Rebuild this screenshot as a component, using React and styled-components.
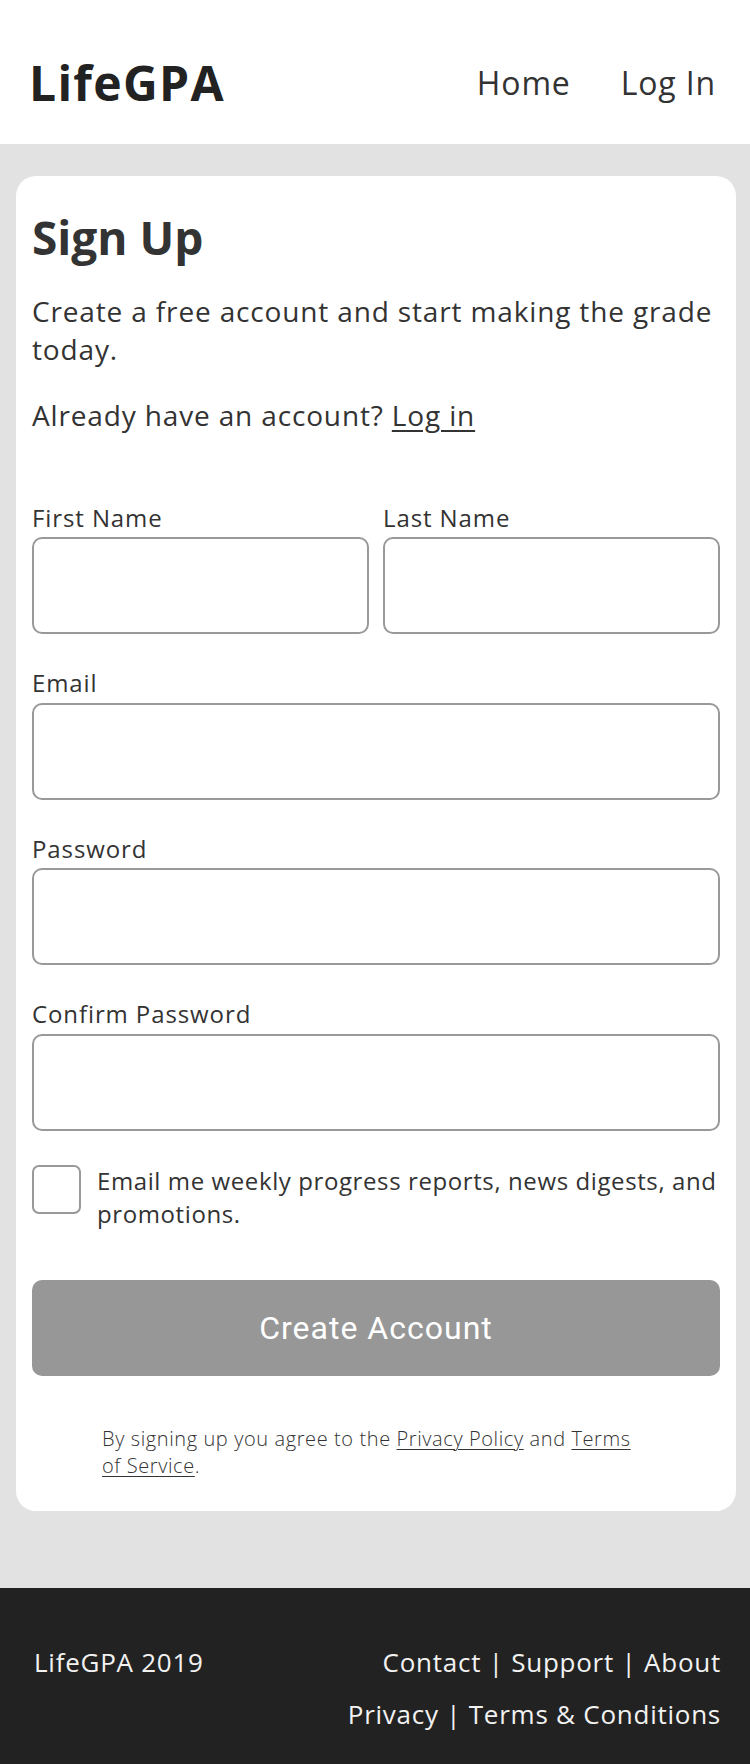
import React from "react";
import styled, { createGlobalStyle } from "styled-components";

const Global = createGlobalStyle`
  html, body { margin: 0; padding: 0; }
  body {
    background: #e2e2e2;
    font-family: "Open Sans", "Liberation Sans", sans-serif;
    color: #333;
  }
  * { box-sizing: border-box; }
`;

const Page = styled.div`
  display: flex;
  flex-direction: column;
  min-height: 1764px;
`;

const Header = styled.header`
  background: #fff;
  height: 144px;
  padding: 22px 34px 0 29px;
  display: flex;
  align-items: center;
  justify-content: space-between;
`;

const Logo = styled.div`
  font-size: 48px;
  font-weight: 700;
  letter-spacing: 1.3px;
  color: #222;
  line-height: 1;
`;

const Nav = styled.nav`
  display: flex;
  gap: 50px;
`;

const NavLink = styled.a`
  font-size: 32px;
  letter-spacing: 0.85px;
  color: #333;
  text-decoration: none;
  line-height: 1;
`;

const Main = styled.main`
  flex: 1;
  padding: 32px 14px 77px 16px;
`;

const Card = styled.section`
  background: #fff;
  border-radius: 20px;
  padding: 34px 16px 32px;
`;

const Title = styled.h1`
  margin: 0;
  font-size: 46px;
  font-weight: 700;
  line-height: 1.2;
  color: #333;
`;

const Lead = styled.p`
  margin: 28px 0 0;
  font-size: 28px;
  line-height: 37.8px;
  letter-spacing: 0.85px;
`;

const Underlined = styled.a`
  color: inherit;
  text-decoration: underline;
  text-underline-offset: ${(p) => p.$offset || 4}px;
  text-decoration-thickness: ${(p) => p.$thick || 2}px;
`;

const Form = styled.form`
  margin-top: 66px;
  display: flex;
  flex-direction: column;
  gap: 32px;
`;

const Row = styled.div`
  display: grid;
  grid-template-columns: 1fr 1fr;
  gap: 14px;
`;

const Field = styled.label`
  display: flex;
  flex-direction: column;
  gap: 3px;
`;

const LabelText = styled.span`
  font-size: 24px;
  line-height: 33.6px;
  letter-spacing: 0.9px;
`;

const Input = styled.input`
  height: 97px;
  width: 100%;
  border: 2px solid #999;
  border-radius: 10px;
  background: #fff;
  font: inherit;
  font-size: 24px;
  padding: 0 16px;
`;

const CheckRow = styled.label`
  display: flex;
  align-items: flex-start;
  gap: 16px;
  margin-top: 1px;
`;

const Box = styled.span`
  flex: none;
  width: 49px;
  height: 49px;
  border: 2px solid #999;
  border-radius: 7px;
  margin-top: 1px;
`;

const CheckText = styled.span`
  flex: 1;
  font-size: 24px;
  line-height: 33px;
  letter-spacing: 0.6px;
`;

const Button = styled.button`
  margin-top: 18px;
  height: 96px;
  width: 100%;
  border: none;
  border-radius: 10px;
  background: #979797;
  color: #fff;
  font-family: Roboto, "Liberation Sans", sans-serif;
  font-size: 32px;
  letter-spacing: 1px;
`;

const Legal = styled.p`
  margin: 49px 0 0;
  padding: 0 70px;
  font-size: 20px;
  font-weight: 300;
  line-height: 27px;
  letter-spacing: 0.6px;
  color: #333;
`;

const Footer = styled.footer`
  background: #222;
  color: #f2f2f2;
  height: 176px;
  padding: 48px 29px 24px 34px;
  display: flex;
  justify-content: space-between;
  align-items: flex-start;
  font-size: 26px;
  letter-spacing: 0.75px;
  line-height: 52px;
`;

const FooterLinks = styled.div`
  display: flex;
  flex-direction: column;
  align-items: flex-end;
`;

export default function App() {
  return (
    <>
      <Global />
      <Page>
        <Header>
          <Logo>LifeGPA</Logo>
          <Nav>
            <NavLink href="#">Home</NavLink>
            <NavLink href="#">Log In</NavLink>
          </Nav>
        </Header>
        <Main>
          <Card>
            <Title>Sign Up</Title>
            <Lead>Create a free account and start making the grade today.</Lead>
            <Lead>
              Already have an account? <Underlined href="#">Log in</Underlined>
            </Lead>
            <Form onSubmit={(e) => e.preventDefault()}>
              <Row>
                <Field>
                  <LabelText>First Name</LabelText>
                  <Input type="text" />
                </Field>
                <Field>
                  <LabelText>Last Name</LabelText>
                  <Input type="text" />
                </Field>
              </Row>
              <Field>
                <LabelText>Email</LabelText>
                <Input type="email" />
              </Field>
              <Field>
                <LabelText>Password</LabelText>
                <Input type="password" />
              </Field>
              <Field>
                <LabelText>Confirm Password</LabelText>
                <Input type="password" />
              </Field>
              <CheckRow>
                <Box />
                <CheckText>
                  Email me weekly progress reports, news digests, and promotions.
                </CheckText>
              </CheckRow>
              <Button type="submit">Create Account</Button>
            </Form>
            <Legal>
              By signing up you agree to the{" "}
              <Underlined href="#" $offset={3} $thick={1}>Privacy Policy</Underlined> and{" "}
              <Underlined href="#" $offset={3} $thick={1}>Terms of Service</Underlined>.
            </Legal>
          </Card>
        </Main>
        <Footer>
          <div>LifeGPA 2019</div>
          <FooterLinks>
            <div>Contact | Support | About</div>
            <div>Privacy | Terms &amp; Conditions</div>
          </FooterLinks>
        </Footer>
      </Page>
    </>
  );
}
